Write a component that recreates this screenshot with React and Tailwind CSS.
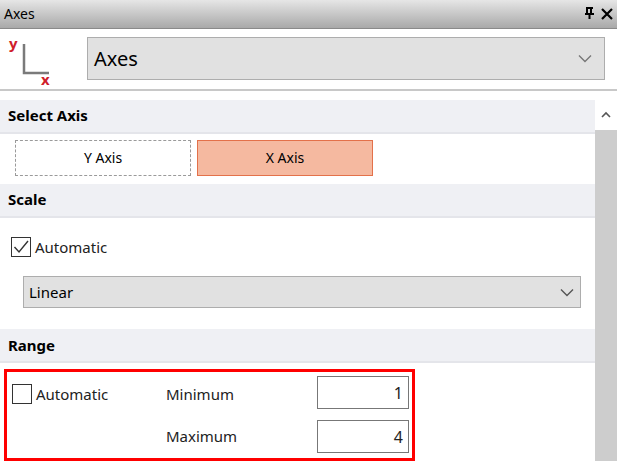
export default function App() {
  const f = { fontFamily: '"Segoe UI","Noto Sans","Open Sans",sans-serif' };
  const Chev = ({ c = "#555" }) => (
    <svg width="14" height="9" viewBox="0 0 14 9"><path d="M1 1.5 L7 7.5 L13 1.5" fill="none" stroke={c} strokeWidth="1.4" /></svg>
  );
  const Header = ({ t }) => (
    <div className="h-[34px] bg-[#eff0f4] border-b-2 border-[#e4e5ea] flex items-center pl-2 text-[15px] font-bold text-black">{t}</div>
  );
  return (
    <div style={f} className="w-[617px] h-[461px] bg-white overflow-hidden flex flex-col text-[#222]">
      <div className="h-[29px] bg-gradient-to-b from-[#e6e6e6] to-[#a9a9a9] flex items-center px-1 text-[14px] text-black border-b border-[#8a8a8a]">
        <span className="flex-1">Axes</span>
        <svg width="11" height="13" viewBox="0 0 11 13" className="mr-[6px]"><path d="M2 1 H9 M3 1 V7 M7 1 V7 M1 7 H10 M5.5 7 V12" fill="none" stroke="#000" strokeWidth="2" /></svg>
        <svg width="12" height="12" viewBox="0 0 12 12"><path d="M1 1 L11 11 M11 1 L1 11" stroke="#000" strokeWidth="2.2" /></svg>
      </div>
      <div className="h-[62px] flex items-center border-b-2 border-[#c8c8c8]">
        <svg width="50" height="54" viewBox="0 0 50 54" className="ml-[6px] mr-[31px] mt-[6px]">
          <text x="3" y="14" fill="#d0202a" fontSize="15" fontWeight="bold" fontFamily="Open Sans,sans-serif">y</text>
          <path d="M18 9 V38 H43" fill="none" stroke="#7a7a7a" strokeWidth="2.5" />
          <text x="35" y="50" fill="#d0202a" fontSize="15" fontWeight="bold" fontFamily="Open Sans,sans-serif">x</text>
        </svg>
        <div className="w-[518px] h-[43px] bg-[#e1e1e1] border border-[#adadad] flex items-center pl-[6px] pr-3">
          <span className="flex-1 text-[20px] text-black">Axes</span>
          <Chev c="#777" />
        </div>
      </div>
      <div className="flex flex-1 mt-[9px]">
        <div className="flex-1 flex flex-col">
          <Header t="Select Axis" />
          <div className="flex gap-[6px] pl-[15px] pt-[6px] pb-[8px] text-[14px] text-black">
            <div className="w-[176px] h-[36px] border border-dashed border-[#9a9a9a] flex items-center justify-center">Y Axis</div>
            <div className="w-[176px] h-[36px] border border-[#e3714a] bg-[#f5b9a0] flex items-center justify-center">X Axis</div>
          </div>
          <Header t="Scale" />
          <div className="flex items-center pl-[11px] mt-[18px] text-[15px]">
            <div className="w-[20px] h-[20px] border-[1.5px] border-[#333] flex items-center justify-center mr-[4px]">
              <svg width="16" height="14" viewBox="0 0 16 14"><path d="M1.5 7 L6 12 L15 1" fill="none" stroke="#333" strokeWidth="1.4" /></svg>
            </div>
            Automatic
          </div>
          <div className="ml-[23px] mt-[18px] w-[558px] h-[32px] bg-[#e1e1e1] border border-[#adadad] flex items-center pl-[5px] pr-[6px] text-[15px] text-black">
            <span className="flex-1">Linear</span>
            <Chev />
          </div>
          <div className="mt-[21px]"><Header t="Range" /></div>
          <div className="ml-[4px] mt-[6px] w-[411px] h-[92px] border-[3px] border-[#ff0000] relative text-[15px]">
            <div className="flex items-center pl-[5px] pt-[4px]">
              <div className="flex items-center w-[154px] pt-[3px]">
                <div className="w-[20px] h-[20px] border-[1.5px] border-[#333] mr-[4px]" />
                Automatic
              </div>
              <span className="w-[151px] pt-[3px]">Minimum</span>
              <div className="w-[92px] h-[33px] border border-[#777] flex items-center justify-end pr-[5px] text-[16px]">1</div>
            </div>
            <div className="flex items-center pl-[159px] mt-[11px]">
              <span className="w-[151px]">Maximum</span>
              <div className="w-[92px] h-[33px] border border-[#777] flex items-center justify-end pr-[5px] text-[16px]">4</div>
            </div>
          </div>
        </div>
        <div className="w-[22px] flex flex-col">
          <div className="h-[30px] bg-white flex items-center justify-center">
            <svg width="10" height="7" viewBox="0 0 10 7"><path d="M1 6 L5 2 L9 6" fill="none" stroke="#555" strokeWidth="1.6" /></svg>
          </div>
          <div className="flex-1 bg-[#cdcdcd]" />
        </div>
      </div>
    </div>
  );
}
